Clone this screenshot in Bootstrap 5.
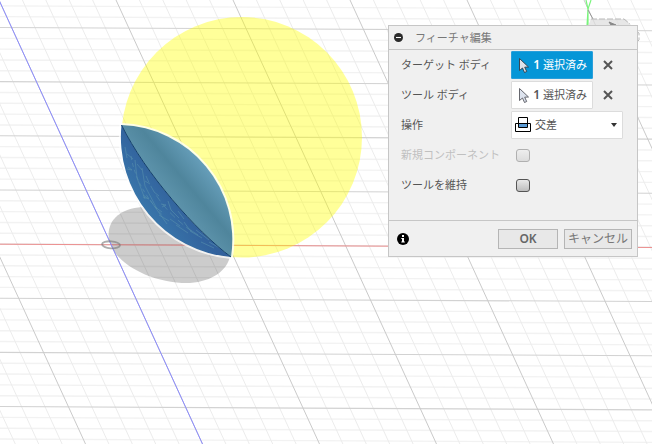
<!DOCTYPE html>
<html lang="ja">
<head>
<meta charset="utf-8">
<meta name="viewport" content="width=device-width, initial-scale=1">
<title>フィーチャ編集</title>
<link href="https://cdn.jsdelivr.net/npm/bootstrap@5.3.0/dist/css/bootstrap.min.css" rel="stylesheet">
<style>
body { font-family: "Noto Sans", "Noto Sans CJK JP", sans-serif; font-size: 11px; line-height: 16px; color: #555; background: #fff; }
.scene { z-index: 0; }
.workspace { padding: 25px 14px 0; z-index: 1; }
.dialog { width: 250px; background: #f0f0f0; border: 1px solid #c6c6c6; }
.dialog-head { height: 24px; padding: 0 5px; border-bottom: 1px solid #c6c6c6; color: #777; }
.dialog-head h1 { font-size: 11px; line-height: 16px; font-weight: 400; }
.dialog-body { padding: 0 12px 20px; }
.field { min-height: 30px; }
.field-label { width: 110px; }
.field-off { color: #c0c0c0; }
.pick { width: 82px; height: 28px; padding: 0 5px 0 6px; border: 1px solid #dcdcdc; border-radius: 1px; background: #fff; color: #555; }
.pick-on { background: #0696d7; border-color: #2a9fdb; color: #fff; }
.pick b { font-size: 12px; font-weight: 600; }
.wipe { width: 30px; height: 28px; padding: 0; border: 0; background: none; }
.op-icon { left: 4px; top: 6px; pointer-events: none; }
.op-select { width: 112px; height: 28px; padding: 0 20px 0 23px; font-size: 11px; line-height: 16px; color: #555; border: 1px solid #dcdcdc; border-radius: 1px; background-color: #fff;
  background-image: url("data:image/svg+xml,%3Csvg xmlns='http://www.w3.org/2000/svg' viewBox='0 0 6 4'%3E%3Cpath d='M0 0h6L3 4z' fill='%23333'/%3E%3C/svg%3E"); background-size: 6px 4px; background-position: right 5px center; }
.tick { appearance: none; width: 14px; height: 13px; margin: 0 0 0 5px; border: 1px solid #555; border-radius: 3px; background: linear-gradient(#e8e8e8, #bdbdbd); }
.tick:disabled { border-color: #b0b0b0; background: linear-gradient(#eee, #dcdcdc); }
.dialog-foot { height: 36px; padding: 0 5px 0 8px; border-top: 1px solid #c6c6c6; }
.act { height: 20px; padding: 0; border: 1px solid #b5b5b5; border-radius: 0; background: #e8e8e8; font-size: 12px; line-height: 16px; color: #777; }
.act-ok { width: 60px; font-weight: 600; color: #666; }
.act-cancel { width: 68px; margin-left: 6px; }
</style>
<script src="https://cdn.jsdelivr.net/npm/bootstrap@5.3.0/dist/js/bootstrap.bundle.min.js"></script>
</head>
<body>
<div class="position-relative min-vh-100 overflow-hidden">
  <svg class="scene position-absolute top-0 start-0 w-100 h-100" viewBox="0 0 652 444" preserveAspectRatio="xMinYMin slice" aria-hidden="true">
    <defs>
      <linearGradient id="rim" gradientUnits="userSpaceOnUse" x1="172" y1="195" x2="208" y2="165"><stop offset="0" stop-color="#5b91a9"/><stop offset=".4" stop-color="#4f859c"/><stop offset="1" stop-color="#68a0bc"/></linearGradient>
      <linearGradient id="back" gradientUnits="userSpaceOnUse" x1="142" y1="212" x2="172" y2="190"><stop offset="0" stop-color="#3978ac"/><stop offset="1" stop-color="#32619c"/></linearGradient>
    </defs>
    <g fill="none">
      <path id="minorRows" stroke="#f2f2f2" stroke-width="1.4"/>
      <path id="minorCols" stroke="#ececec"/>
      <path id="majorRows" stroke="#d2d2d2" stroke-width="1.1"/>
      <path id="majorCols" stroke="#cacaca"/>
    </g>
    <path d="M142 207C119 209 106 221 109 240C114 263 151 284 190 283C213 281 226 271 230 257L153 212Z" fill="#000" fill-opacity=".2"/>
    <path d="M0 244.2L652 247.5" stroke="#f66" stroke-opacity=".6"/>
    <path d="M-1 0L202.5 444" stroke="#8c8cff"/>
    <ellipse cx="111" cy="244.800" rx="9" ry="3.500" fill="none" stroke="#777" stroke-opacity=".6" stroke-width="1.800" transform="rotate(4 111 245)"/>
    <circle cx="241.700" cy="137.300" r="120.300" fill="#ff0" fill-opacity=".4"/>
    <path d="M121.500 125A114.700 114.700 0 0 1 231 257A120.300 120.300 0 0 1 121.500 125Z" fill="none" stroke="#fff" stroke-opacity=".75" stroke-width="4"/>
    <path d="M121.500 125A114.700 114.700 0 0 1 231 257C196 231 145 173 121.500 125Z" fill="url(#rim)"/>
    <path d="M121.500 125C145 173 196 231 231 257A120.300 120.300 0 0 1 121.500 125Z" fill="url(#back)"/>
    <g fill="none" stroke="#568fae" stroke-width="1" stroke-opacity=".6">
      <path d="M125 147l2 11M127 154l6 5M128 167l4 3-5-1M135 160l2 18 8 21M137 164l5 6M142 168l3 18 12 23M145 181l5 3M150 200l17 24M143 195l6 4-6-2M154 192l5 4M155 207l7 5M161 204l5 1-4 2M159 215l10 6M168 201l3 9 8 8M170 219l10 7M178 211l6 8M176 225l12 8M184 222l5 7 9 6M190 231l12 7M196 230l13 10M201 242l13 6M209 242l9 5"/>
      <path d="M131 156c4 24 15 41 32 60" stroke-dasharray="4 3"/><path d="M146 176c12 28 28 42 49 58" stroke-dasharray="7 4"/>
    </g>
    <path d="M121.500 125C145 173 196 231 231 257" fill="none" stroke="#123f6f"/>
    <path d="M586 0l2 9-1 17M591 0l-3 9v17" fill="none" stroke="#79f47c" stroke-width="1.200"/>
    <path d="M588 10l5 9" stroke="#999"/>
    <path d="M588 26l3-7h34l4 4 9 9v8l-2 3V26Z" fill="#ddd" fill-opacity=".7"/>
    <path d="M591 19h33l6 5M636 31l3 2v7l-3 3" fill="none" stroke="#b9b9b9" stroke-dasharray="6 2"/>
    <path d="M609 22l7 3h-5Z" fill="#888" stroke="#888"/>
  </svg>

  <main class="workspace position-relative d-flex justify-content-end">
    <form class="dialog" onsubmit="return false">
      <header class="dialog-head d-flex align-items-center gap-2">
        <svg width="9" height="9" viewBox="0 0 10 10" aria-hidden="true"><circle cx="5" cy="5" r="5" fill="#2b2b2b"/><path d="M2.200 5h5.600" stroke="#fff" stroke-width="1.200"/></svg>
        <h1 class="m-0 ps-1">フィーチャ編集</h1>
      </header>
      <div class="dialog-body">
        <div class="field d-flex align-items-center">
          <label class="field-label" for="target">ターゲット ボディ</label>
          <button class="pick pick-on d-flex align-items-center" id="target" type="button">
            <svg class="flex-shrink-0" width="12" height="17" viewBox="0 0 12 17" aria-hidden="true"><path d="M1.500 1.500v12l3-2.500 2 4.500 2.200-1-2-4.300 3.800-.2Z" fill="#dfe3ea" stroke="#333a44" stroke-width=".9"/></svg>
            <span class="ms-auto text-nowrap"><b>1</b> 選択済み</span>
          </button>
          <button class="wipe d-flex align-items-center justify-content-center" type="button" aria-label="クリア"><svg width="10" height="10" viewBox="0 0 10 10" aria-hidden="true"><path d="M1 1l8 8M9 1L1 9" stroke="#555" stroke-width="2"/></svg></button>
        </div>
        <div class="field d-flex align-items-center">
          <label class="field-label" for="tool">ツール ボディ</label>
          <button class="pick d-flex align-items-center" id="tool" type="button">
            <svg class="flex-shrink-0" width="12" height="17" viewBox="0 0 12 17" aria-hidden="true"><path d="M1.500 1.500v12l3-2.500 2 4.500 2.200-1-2-4.300 3.800-.2Z" fill="#dde3ee" stroke="#56575f" stroke-width=".9"/></svg>
            <span class="ms-auto text-nowrap"><b>1</b> 選択済み</span>
          </button>
          <button class="wipe d-flex align-items-center justify-content-center" type="button" aria-label="クリア"><svg width="10" height="10" viewBox="0 0 10 10" aria-hidden="true"><path d="M1 1l8 8M9 1L1 9" stroke="#555" stroke-width="2"/></svg></button>
        </div>
        <div class="field d-flex align-items-center">
          <label class="field-label" for="operation">操作</label>
          <div class="position-relative">
            <select class="form-select op-select" id="operation"><option>交差</option></select>
            <svg class="op-icon position-absolute" width="16" height="16" viewBox="0 0 16 16" aria-hidden="true"><path d="M.5 6.500h15v8H.5Z" fill="#fff" stroke="#000"/><path d="M3.500.5h9v10h-9Z" fill="#fff" stroke="#000"/><path d="M4 7h8v3H4Z" fill="#5b9bd5"/><path d="M3.500 6.500h9" stroke="#000"/></svg>
          </div>
        </div>
        <div class="field d-flex align-items-center field-off">
          <label class="field-label" for="component">新規コンポーネント</label>
          <input class="tick" id="component" type="checkbox" disabled>
        </div>
        <div class="field d-flex align-items-center">
          <label class="field-label" for="keep">ツールを維持</label>
          <input class="tick" id="keep" type="checkbox">
        </div>
      </div>
      <footer class="dialog-foot d-flex align-items-center">
        <svg width="12" height="12" viewBox="0 0 12 12" aria-hidden="true"><circle cx="6" cy="6" r="6" fill="#000"/><path d="M5 2h2v2H5ZM4.300 5H7v3.500h.8v1H4.300v-1H5V6h-.7Z" fill="#fff"/></svg>
        <button class="act act-ok ms-auto" type="submit">OK</button>
        <button class="act act-cancel text-nowrap" type="button">キャンセル</button>
      </footer>
    </form>
  </main>
</div>
<script>
// Ground-plane grid: every fifth line is a major one.
const paths = { minorRows: '', majorRows: '', minorCols: '', majorCols: '' };
for (let i = -3; i < 40; i++) {
  const y = 27.5 + i * 10.83;
  paths[i % 5 ? 'minorRows' : 'majorRows'] += `M0 ${y}L652 ${y + 3.3}`;
}
for (let i = -9; i < 29; i++) {
  const x = -1 + i * 23.4;
  paths[i % 5 ? 'minorCols' : 'majorCols'] += `M${x} 0L${x + 203.5} 444`;
}
for (const id in paths) document.getElementById(id).setAttribute('d', paths[id]);
</script>
</body>
</html>
